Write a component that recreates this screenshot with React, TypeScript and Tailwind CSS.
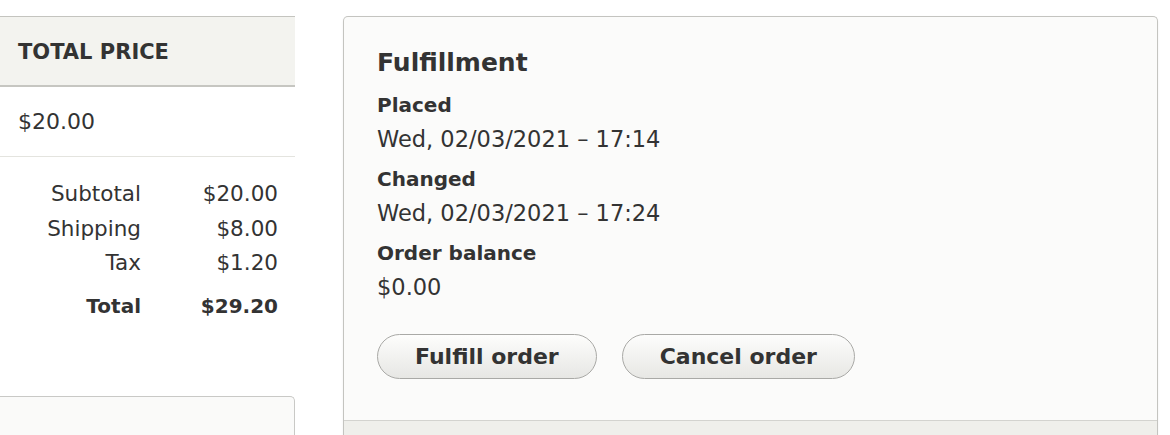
import React from 'react';

const summary = [
  { label: 'Subtotal', value: '$20.00' },
  { label: 'Shipping', value: '$8.00' },
  { label: 'Tax', value: '$1.20' },
];

const fields = [
  { label: 'Placed', value: 'Wed, 02/03/2021 \u2013 17:14' },
  { label: 'Changed', value: 'Wed, 02/03/2021 \u2013 17:24' },
  { label: 'Order balance', value: '$0.00' },
];

const App: React.FC = () => {
  return (
    <div
      className="flex h-[435px] w-[1170px] gap-[48px] overflow-hidden bg-white pt-4 text-[#333333]"
      style={{ fontFamily: '"DejaVu Sans", Verdana, sans-serif' }}
    >
      {/* Colonne gauche : prix */}
      <div className="flex w-[295px] shrink-0 flex-col">
        <div className="flex h-[71px] items-center border-t border-b-2 border-t-[#c4c4bf] border-b-[#c6c6c1] bg-[#f3f3ef] pt-[3px] pl-[18px] text-[21px] font-bold">
          TOTAL PRICE
        </div>
        <div className="flex h-[70px] items-center border-b border-[#e4e4df] pl-[18px] text-[22px]">
          $20.00
        </div>

        <div className="grid grid-cols-[141px_1fr] pt-[20px] pr-[17px]">
          {summary.map((row) => (
            <React.Fragment key={row.label}>
              <div className="h-[34.5px] text-right text-[21.5px] leading-[34.5px]">{row.label}</div>
              <div className="h-[34.5px] text-right text-[21.5px] leading-[34.5px]">{row.value}</div>
            </React.Fragment>
          ))}
          <div className="mt-[8px] h-[34px] text-right text-[20px] font-bold leading-[34px]">Total</div>
          <div className="mt-[8px] h-[34px] text-right text-[20px] font-bold leading-[34px]">$29.20</div>
        </div>

        <div className="mt-auto h-[39px] rounded-tr-[5px] border-t border-r border-[#c9c9c6] bg-[#fafaf9]" />
      </div>

      {/* Carte : traitement de la commande */}
      <div className="flex w-[815px] shrink-0 flex-col rounded-t-[5px] border border-b-0 border-[#c4c4c0] bg-[#fbfbfa] shadow-[0_1px_2px_rgba(0,0,0,0.08)]">
        <div className="flex flex-col px-[33px] pt-[31px] pb-[41px]">
          <h2 className="text-[25px] font-bold leading-[30px]">Fulfillment</h2>
          <div className="mt-[11px] flex flex-col gap-[7px]">
            {fields.map((f) => (
              <div key={f.label} className="flex flex-col">
                <span className="h-[33px] text-[20px] font-bold leading-[33px]">{f.label}</span>
                <span className="h-[34px] text-[22.5px] leading-[34px]">{f.value}</span>
              </div>
            ))}
          </div>
          <div className="mt-[30px] flex gap-[25px]">
            <button
              type="button"
              className="h-[45px] rounded-full border border-[#a9a9a6] bg-gradient-to-b from-[#fdfdfc] to-[#e7e7e4] px-[37px] text-[22px] font-bold text-[#333333]"
            >
              Fulfill order
            </button>
            <button
              type="button"
              className="h-[45px] rounded-full border border-[#a9a9a6] bg-gradient-to-b from-[#fdfdfc] to-[#e7e7e4] px-[37px] text-[22px] font-bold text-[#333333]"
            >
              Cancel order
            </button>
          </div>
        </div>
        <div className="flex-1 border-t border-[#d3d3cf] bg-[#efefeb]" />
      </div>
    </div>
  );
};

export default App;
